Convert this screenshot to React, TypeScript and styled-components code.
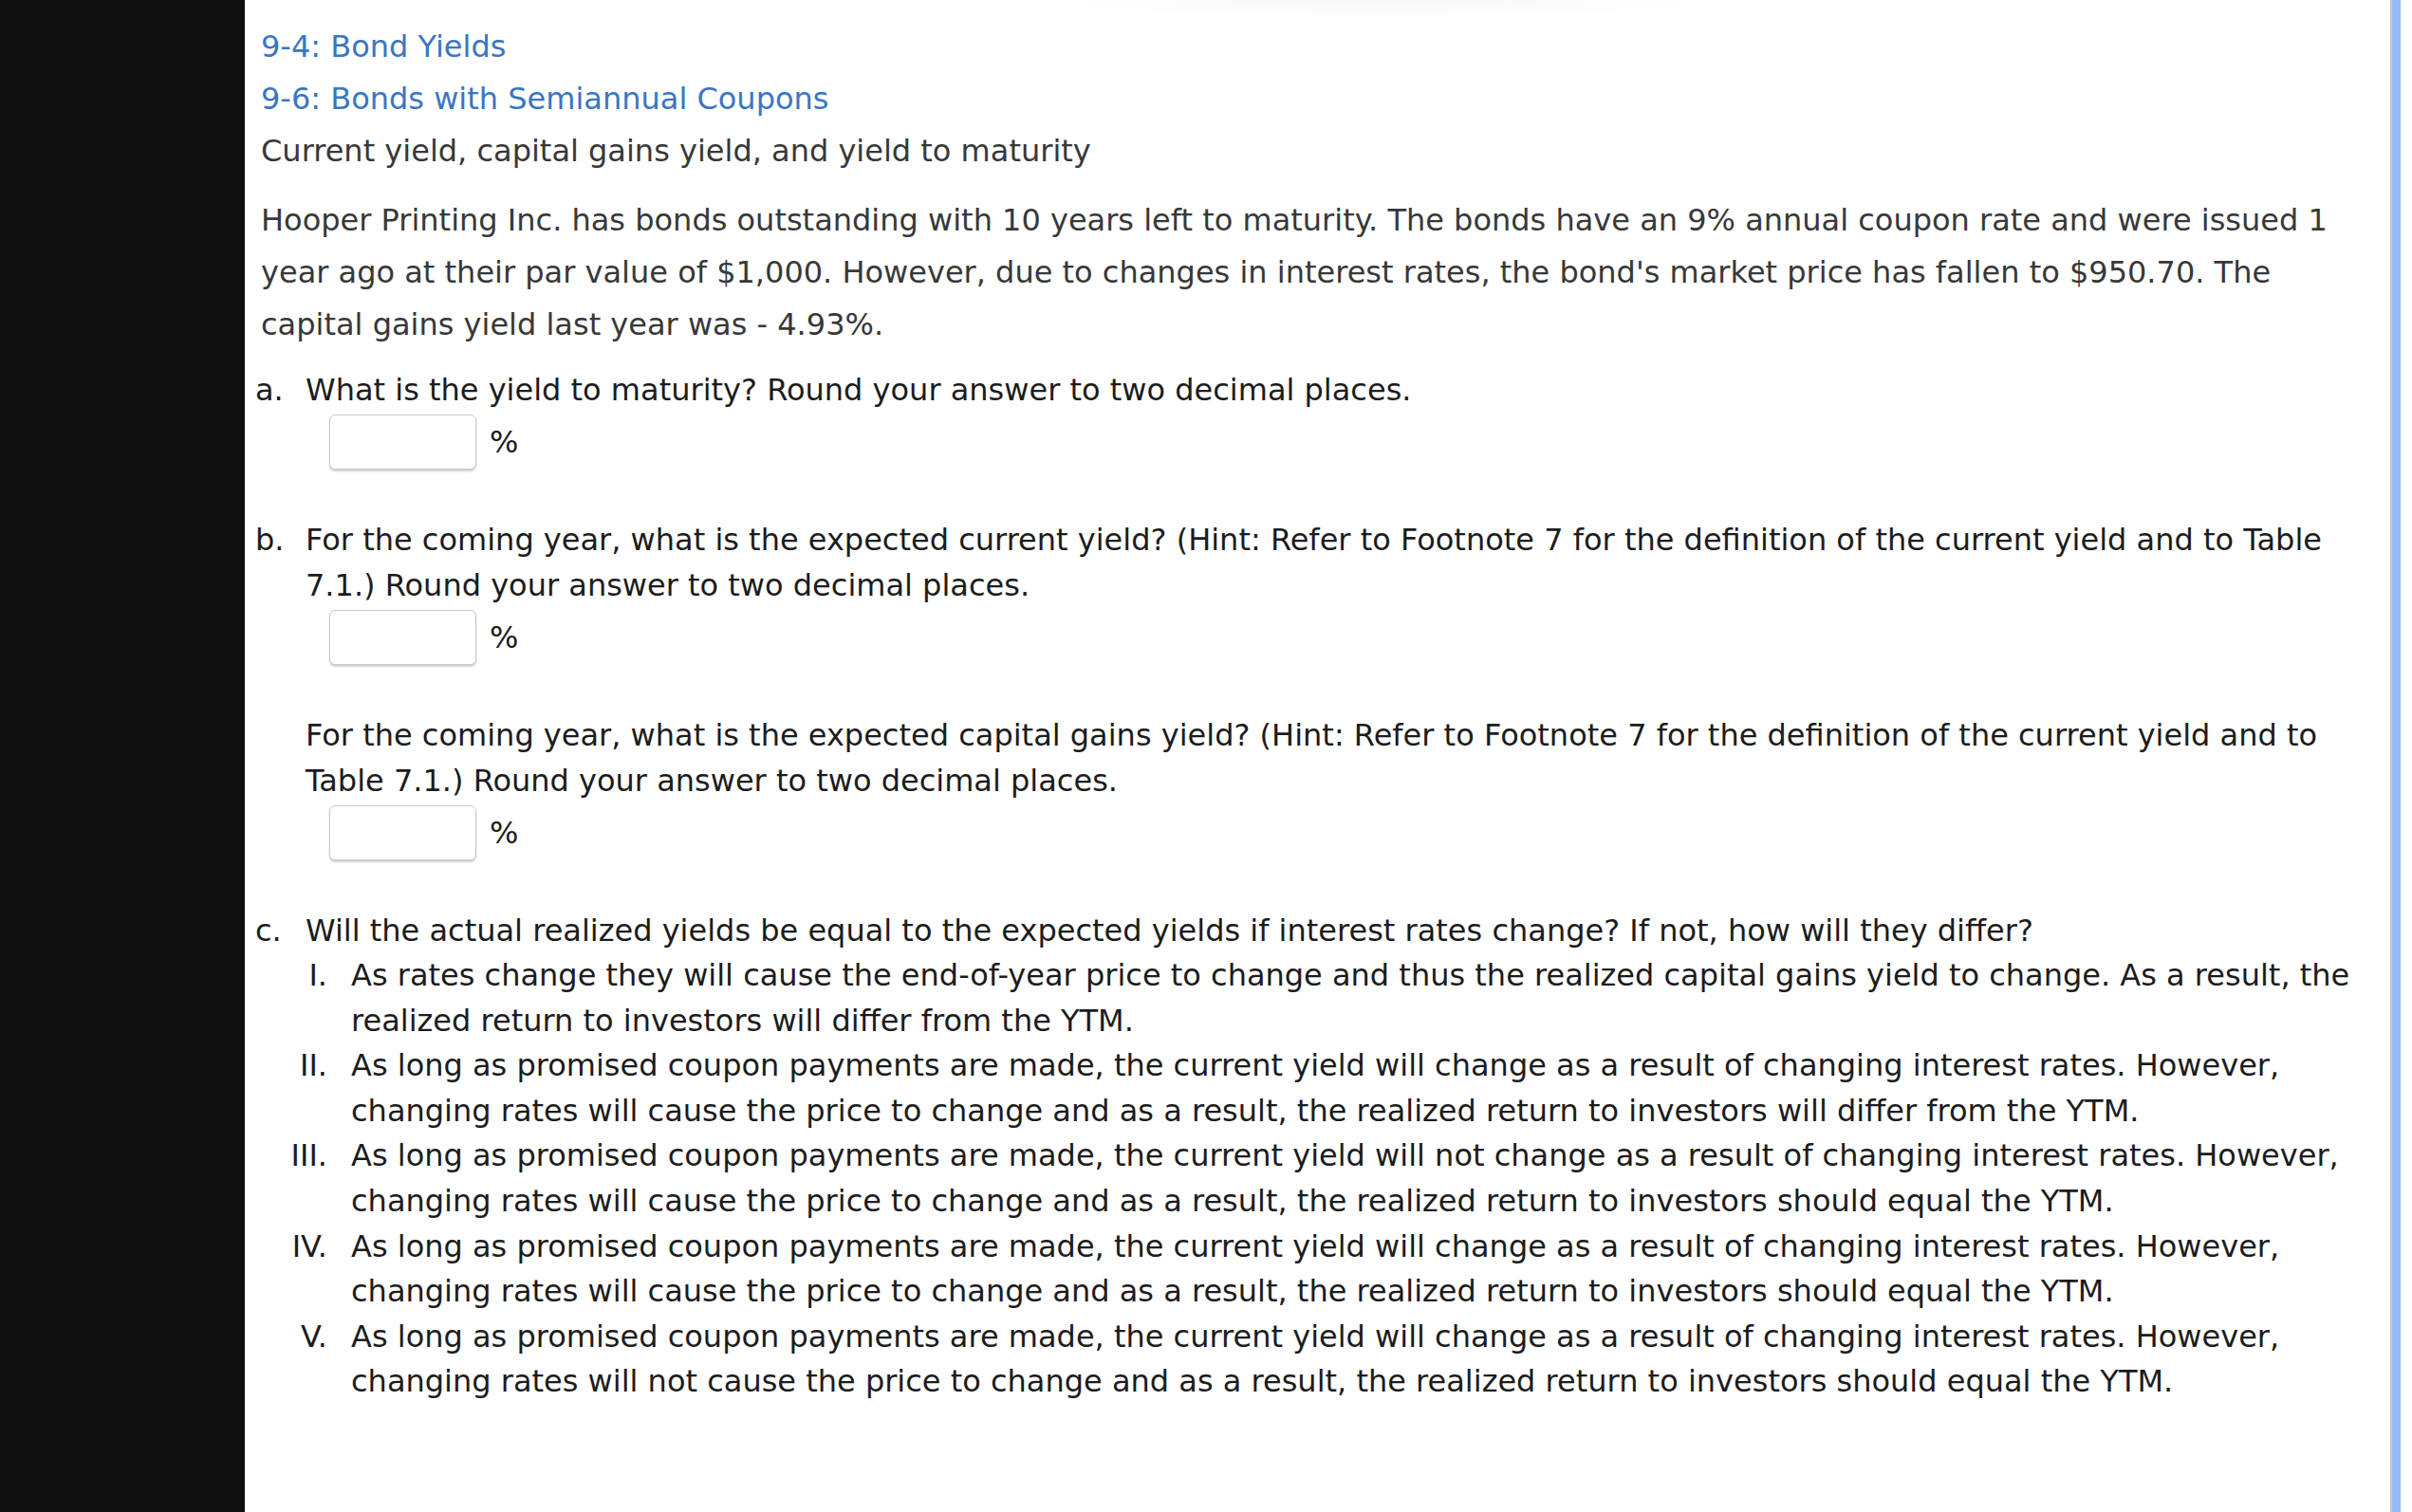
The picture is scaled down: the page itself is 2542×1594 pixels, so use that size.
import React from "react";
import styled, { createGlobalStyle } from "styled-components";

const GlobalStyle = createGlobalStyle`
    html, body {
        margin: 0;
        padding: 0;
        background: #ffffff;
    }
    body {
        font-family: "DejaVu Sans", Verdana, sans-serif;
    }
`;

const Page = styled.div`
    display: flex;
    height: 1594px;
    overflow: hidden;
`;

const SideBar = styled.div`
    width: 258px;
    flex-shrink: 0;
    background-color: #0f0f0f;
`;

const Content = styled.main`
    position: relative;
    flex: 1;
    padding: 22px 24px 0 17px;
    background-color: #ffffff;
    color: #1c1c1c;
    font-size: 32px;
`;

const TopShade = styled.div`
    position: absolute;
    top: -30px;
    left: 840px;
    width: 720px;
    height: 52px;
    border-radius: 50%;
    background: radial-gradient(ellipse at center, rgba(0, 0, 0, 0.035), rgba(0, 0, 0, 0) 70%);
    pointer-events: none;
`;

const ScrollEdge = styled.div`
    display: flex;
    flex-shrink: 0;
    width: 23px;

    .rule {
        width: 2px;
        background-color: #c8c8c8;
    }

    .thumb {
        width: 9px;
        background-color: #93bcf6;
    }

    .rest {
        flex: 1;
        background-color: #ffffff;
    }
`;

const TopicLink = styled.a`
    display: block;
    line-height: 55px;
    color: #3a76c2;
    text-decoration: none;
`;

const Subtitle = styled.div`
    line-height: 55px;
    color: #383838;
`;

const Intro = styled.p`
    margin: 18px 0 17px;
    line-height: 55px;
    color: #383838;
`;

const QuestionList = styled.div`
    margin-left: -6px;
`;

const Question = styled.div<{ $gap?: number }>`
    display: grid;
    grid-template-columns: 53px 1fr;
    margin-bottom: ${(p) => p.$gap ?? 50}px;
    line-height: 48px;

    .label {
        grid-column: 1;
    }

    .body {
        grid-column: 2;
    }
`;

const AnswerRow = styled.div`
    display: flex;
    align-items: center;
    gap: 14px;
    margin: 2px 0 0 25px;
`;

const AnswerBox = styled.input`
    width: 155px;
    height: 58px;
    box-sizing: border-box;
    border: 1px solid #c9c9c9;
    border-radius: 6px;
    box-shadow: 0 2px 2px rgba(0, 0, 0, 0.18);
    background: #ffffff;
    font: inherit;
    outline: none;
`;

const Unit = styled.span`
    line-height: 58px;
`;

const Choices = styled.div`
    margin-left: -25px;
`;

const Choice = styled.div`
    display: grid;
    grid-template-columns: 48px 1fr;
    column-gap: 25px;
    line-height: 47.6px;

    .num {
        text-align: right;
    }
`;

const PercentInput: React.FC = () => (
    <AnswerRow>
        <AnswerBox type="text" />
        <Unit>%</Unit>
    </AnswerRow>
);

const choices = [
    ["I.", "As rates change they will cause the end-of-year price to change and thus the realized capital gains yield to change. As a result, the realized return to investors will differ from the YTM."],
    ["II.", "As long as promised coupon payments are made, the current yield will change as a result of changing interest rates. However, changing rates will cause the price to change and as a result, the realized return to investors will differ from the YTM."],
    ["III.", "As long as promised coupon payments are made, the current yield will not change as a result of changing interest rates. However, changing rates will cause the price to change and as a result, the realized return to investors should equal the YTM."],
    ["IV.", "As long as promised coupon payments are made, the current yield will change as a result of changing interest rates. However, changing rates will cause the price to change and as a result, the realized return to investors should equal the YTM."],
    ["V.", "As long as promised coupon payments are made, the current yield will change as a result of changing interest rates. However, changing rates will not cause the price to change and as a result, the realized return to investors should equal the YTM."],
];

const App: React.FC = () => {
    return (
        <Page>
            <GlobalStyle />
            <SideBar />
            <Content>
                <TopShade />
                <TopicLink href="#">9-4: Bond Yields</TopicLink>
                <TopicLink href="#">9-6: Bonds with Semiannual Coupons</TopicLink>
                <Subtitle>Current yield, capital gains yield, and yield to maturity</Subtitle>
                <Intro>
                    Hooper Printing Inc. has bonds outstanding with 10 years left to maturity. The bonds have an 9% annual coupon rate and were issued 1 year ago at their par value of $1,000. However, due to changes in interest rates, the bond's market price has fallen to $950.70. The capital gains yield last year was - 4.93%.
                </Intro>
                <QuestionList>
                    <Question>
                        <span className="label">a.</span>
                        <div className="body">
                            What is the yield to maturity? Round your answer to two decimal places.
                            <PercentInput />
                        </div>
                    </Question>
                    <Question>
                        <span className="label">b.</span>
                        <div className="body">
                            For the coming year, what is the expected current yield? (Hint: Refer to Footnote 7 for the definition of the current yield and to Table 7.1.) Round your answer to two decimal places.
                            <PercentInput />
                        </div>
                    </Question>
                    <Question>
                        <span className="label"></span>
                        <div className="body">
                            For the coming year, what is the expected capital gains yield? (Hint: Refer to Footnote 7 for the definition of the current yield and to Table 7.1.) Round your answer to two decimal places.
                            <PercentInput />
                        </div>
                    </Question>
                    <Question $gap={0}>
                        <span className="label">c.</span>
                        <div className="body">
                            Will the actual realized yields be equal to the expected yields if interest rates change? If not, how will they differ?
                            <Choices>
                                {choices.map(([num, text]) => (
                                    <Choice key={num}>
                                        <span className="num">{num}</span>
                                        <span>{text}</span>
                                    </Choice>
                                ))}
                            </Choices>
                        </div>
                    </Question>
                </QuestionList>
            </Content>
            <ScrollEdge>
                <div className="rule" />
                <div className="thumb" />
                <div className="rest" />
            </ScrollEdge>
        </Page>
    );
};

export default App;
